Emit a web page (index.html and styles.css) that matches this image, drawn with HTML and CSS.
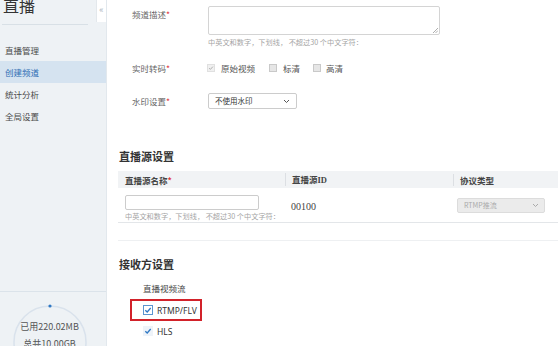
FILE: index.html
```html
<!DOCTYPE html>
<html lang="zh">
<head>
<meta charset="utf-8">
<link rel="stylesheet" href="styles.css">
</head>
<body>
<div class="app">
  <aside class="sidebar">
    <div class="brand">直播</div>
    <div class="collapse">«</div>
    <nav class="nav">
      <div class="nav-item">直播管理</div>
      <div class="nav-item active">创建频道</div>
      <div class="nav-item">统计分析</div>
      <div class="nav-item">全局设置</div>
    </nav>
    <div class="spacer"></div>
    <div class="storage">
      <svg class="gauge" width="107" height="60" viewBox="0 0 107 60">
        <circle cx="50" cy="50" r="36" fill="none" stroke="#d9e2ec" stroke-width="1.5"/>
        <circle cx="50" cy="14" r="1.6" fill="#2f78c4"/>
      </svg>
      <div class="used">已用220.02MB</div>
      <div class="total">总共10.00GB</div>
    </div>
  </aside>

  <main class="main">
    <div class="form">
      <div class="row row-desc">
        <div class="label">频道描述<span class="req">*</span></div>
        <div class="field">
          <div class="textarea"><svg class="grip" width="6" height="6" viewBox="0 0 6 6"><path d="M6 1L1 6M6 3.5L3.5 6" stroke="#999" stroke-width="0.8"/></svg></div>
          <div class="hint">中英文和数字，下划线， 不超过30 个中文字符：</div>
        </div>
      </div>
      <div class="row row-trans">
        <div class="label">实时转码<span class="req">*</span></div>
        <div class="field checks">
          <span class="opt o1"><span class="cb cb-dis"><svg width="8" height="8" viewBox="0 0 8 8"><path d="M1.5 4.2L3.2 5.8L6.5 2.2" fill="none" stroke="#9a9a9a" stroke-width="1"/></svg></span>原始视频</span>
          <span class="opt o2"><span class="cb cb-off"></span>标清</span>
          <span class="opt o3"><span class="cb cb-off"></span>高清</span>
        </div>
      </div>
      <div class="row row-wm">
        <div class="label">水印设置<span class="req">*</span></div>
        <div class="field">
          <div class="select">不使用水印<svg class="chev" width="7" height="5" viewBox="0 0 7 5"><path d="M1 1L3.5 3.5L6 1" fill="none" stroke="#555" stroke-width="1"/></svg></div>
        </div>
      </div>
    </div>

    <h2 class="section">直播源设置</h2>
    <div class="table">
      <div class="thead">
        <div class="th c1">直播源名称<span class="req">*</span></div>
        <div class="th c2">直播源<span class="serif">ID</span></div>
        <div class="th c3">协议类型</div>
      </div>
      <div class="trow">
        <div class="td c1">
          <div class="input"></div>
          <div class="hint">中英文和数字，下划线， 不超过30 个中文字符：</div>
        </div>
        <div class="td c2 serif num">00100</div>
        <div class="td c3">
          <div class="select select-dis">RTMP推流<svg class="chev" width="7" height="5" viewBox="0 0 7 5"><path d="M1 1L3.5 3.5L6 1" fill="none" stroke="#aaa" stroke-width="1"/></svg></div>
        </div>
      </div>
      <div class="trow-empty"></div>
    </div>

    <h2 class="section section2">接收方设置</h2>
    <div class="stream-label">直播视频流</div>
    <div class="highlight">
      <span class="opt2"><span class="cb cb-on focus"><svg width="8" height="8" viewBox="0 0 8 8"><path d="M1.3 4.2L3.2 6L6.7 2" fill="none" stroke="#2f78c4" stroke-width="1.3"/></svg></span>RTMP/FLV</span>
    </div>
    <div class="hls">
      <span class="opt2"><span class="cb cb-on"><svg width="8" height="8" viewBox="0 0 8 8"><path d="M1.3 4.2L3.2 6L6.7 2" fill="none" stroke="#2f78c4" stroke-width="1.3"/></svg></span>HLS</span>
    </div>
  </main>
</div>
</body>
</html>
```

FILE: styles.css
```css
* { box-sizing: border-box; }
html, body { margin: 0; padding: 0; }
body {
  width: 558px;
  height: 346px;
  overflow: hidden;
  background: #fff;
  font-family: "Noto Sans CJK SC", "Noto Sans", sans-serif;
  color: #555;
}
.app { display: flex; height: 346px; }

.sidebar {
  position: relative;
  width: 107px;
  flex: none;
  background: #eef2f5;
  border-right: 1px solid #e2e8ed;
  display: flex;
  flex-direction: column;
}
.brand {
  font-size: 16px;
  line-height: 18px;
  margin-top: -4px;
  padding-left: 1px;
  height: 29px;
  color: #333;
  border-bottom: 1px solid #d8e0e6;
  margin-right: 18px;
  margin-left: 2px;
}
.collapse {
  position: absolute;
  top: 0;
  right: 0;
  width: 10px;
  height: 22px;
  background: #fff;
  border-left: 1px solid #e3e8ec;
  color: #a9b2bb;
  font-size: 9px;
  line-height: 20px;
  text-align: center;
}
.nav { margin-top: 14px; }
.nav-item {
  height: 22px;
  line-height: 22px;
  font-size: 8.5px;
  padding-left: 5px;
  color: #4a4a4a;
}
.nav-item.active { background: #d5e3f0; color: #2c6db4; }
.spacer { flex: 1; }
.storage {
  position: relative;
  height: 55px;
  border-top: 1px solid #dbe3ea;
  overflow: hidden;
}
.gauge { position: absolute; top: 0; left: 0; }
.used, .total {
  position: relative;
  text-align: center;
  font-size: 9px;
  color: #555;
  padding-right: 7px;
}
.used { margin-top: 29px; line-height: 12px; }
.total { margin-top: 5px; line-height: 12px; }

.main {
  flex: 1;
  min-width: 0;
  padding-left: 11px;
  overflow: hidden;
}
.req { color: #e0393e; }
.form { padding-left: 14px; }
.row { display: flex; }
.label {
  width: 76px;
  flex: none;
  font-size: 8.5px;
  color: #666;
}
.row-desc { margin-top: 6px; }
.row-desc .label { line-height: 16px; }
.textarea {
  position: relative;
  width: 232px;
  height: 29px;
  border: 1px solid #d4d4d4;
  border-radius: 2px;
}
.grip { position: absolute; right: 1px; bottom: 1px; }
.hint {
  font-size: 7.2px;
  line-height: 10px;
  color: #a5a5a5;
  margin-top: 2px;
  white-space: nowrap;
}
.row-trans { margin-top: 13px; height: 16px; line-height: 16px; }
.checks { display: flex; font-size: 8.5px; color: #555; }
.opt { display: flex; align-items: center; }
.cb {
  width: 8px;
  height: 8px;
  display: inline-flex;
  align-items: center;
  justify-content: center;
  margin-right: 6px;
  flex: none;
}
.cb-dis { background: #f0f0f0; border: 1px solid #e0e0e0; margin-left: -1px; }
.cb-off { background: #e6e6e6; border: 1px solid #c9c9c9; }
.o1 { margin-right: 14px; }
.o2 { margin-right: 13px; }
.o3 .cb { margin-right: 5px; }

.row-wm { margin-top: 17px; }
.row-wm .label { line-height: 16px; }
.select {
  position: relative;
  width: 89px;
  height: 16px;
  border: 1px solid #ccc;
  border-radius: 2px;
  font-size: 7.5px;
  line-height: 14px;
  padding-left: 6px;
  color: #333;
}
.chev { position: absolute; right: 6px; top: 5px; }

.section {
  margin: 39px 0 0 1px;
  font-size: 11px;
  line-height: 16px;
  font-weight: bold;
  color: #333;
}
.table { width: 520px; margin-top: 7px; }
.thead {
  display: flex;
  height: 17px;
  background: #f1f3f5;
  align-items: center;
  font-size: 8.5px;
  font-weight: bold;
  color: #444;
}
.c1 { width: 167px; flex: none; padding-left: 7px; }
.c2 { width: 168px; flex: none; padding-left: 6px; }
.c3 { flex: 1; padding-left: 6px; }
.th.c2, .th.c3 { border-left: 1px solid #dcdfe3; line-height: 12px; }
.serif { font-family: "Liberation Serif", "Noto Sans CJK SC", serif; }
.trow {
  display: flex;
  height: 35px;
  align-items: center;
  border-bottom: 1px solid #e3e6e9;
}
.td.c1 { padding-top: 5px; }
.input {
  width: 134px;
  height: 15px;
  border: 1px solid #ccc;
  border-radius: 2px;
}
.td .hint { margin-top: 1px; }
.num { font-size: 10px; color: #444; padding-left: 6px; padding-top: 2px; }
.td.c3 { padding-left: 4px; }
.select-dis {
  width: 88px;
  height: 15px;
  background: #ebebeb;
  border-color: #dcdcdc;
  color: #aaa;
  font-size: 7px;
  line-height: 13px;
}
.select-dis .chev { top: 4px; right: 5px; }
.trow-empty { height: 18px; border-bottom: 1px solid #eef0f2; }

.section2 { margin-top: 15px; }
.stream-label {
  margin: 10px 0 0 25px;
  font-size: 8.5px;
  line-height: 12px;
  color: #444;
}
.highlight {
  width: 72px;
  height: 22px;
  margin: 5px 0 0 12px;
  border: 2px solid #d2222a;
  padding-left: 11px;
  display: flex;
  align-items: center;
}
.opt2 {
  display: flex;
  align-items: center;
  font-family: "Noto Sans", "DejaVu Sans", sans-serif;
  font-size: 8.5px;
  color: #333;
}
.cb-on {
  width: 10px;
  height: 10px;
  background: #eef3f9;
  margin-right: 4px;
}
.cb-on.focus { border: 1px solid #5b95d0; background: #fff; }
.hls { margin: 2px 0 0 25px; height: 16px; display: flex; align-items: center; }
```
